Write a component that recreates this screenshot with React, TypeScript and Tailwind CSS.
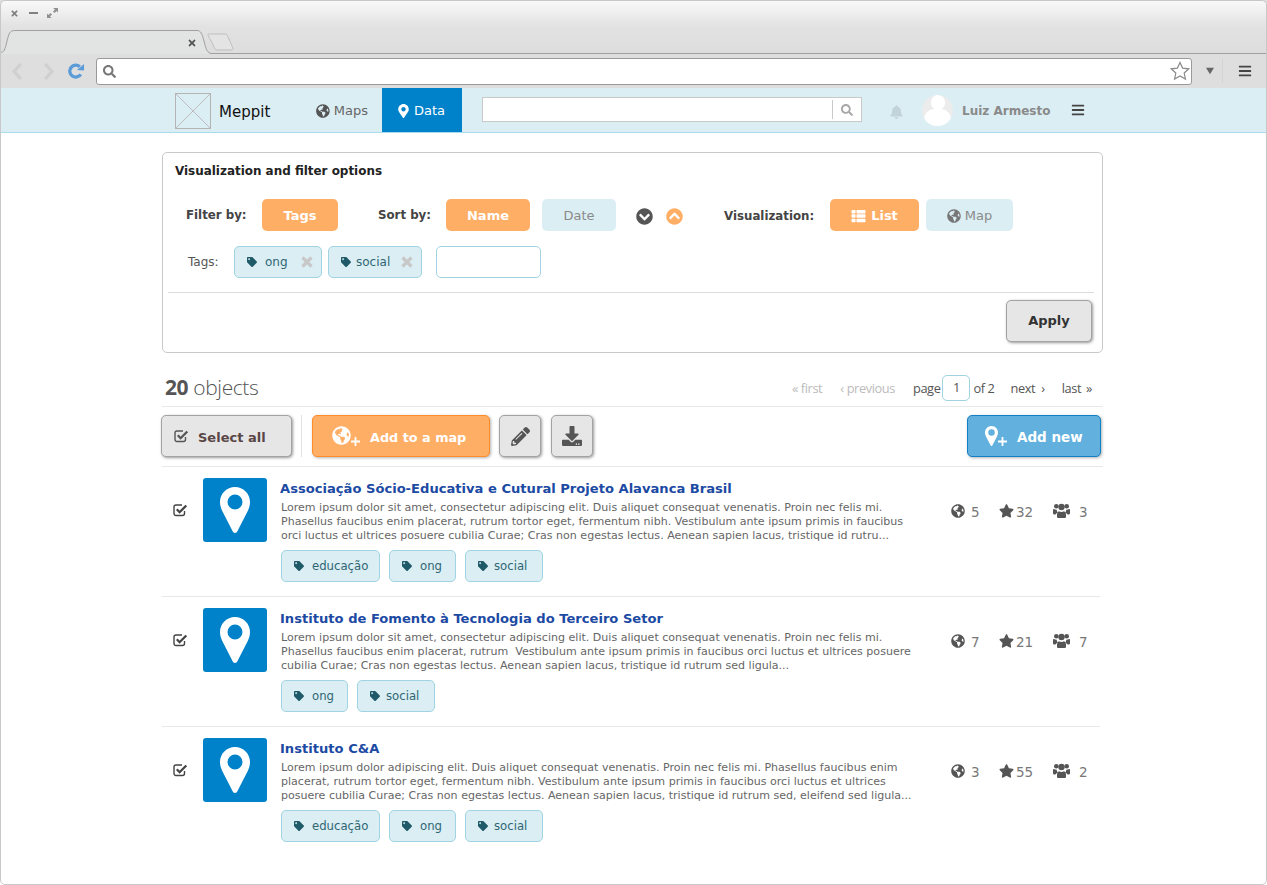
import type { ReactNode } from "react";
import {
  FaBars,
  FaBell,
  FaChevronCircleDown,
  FaChevronCircleUp,
  FaDownload,
  FaGlobeAmericas,
  FaMapMarkerAlt,
  FaPencilAlt,
  FaSearch,
  FaStar,
  FaTag,
  FaThList,
  FaTimes,
} from "react-icons/fa";

const lorem1 = [
  "Lorem ipsum dolor sit amet, consectetur adipiscing elit. Duis aliquet consequat venenatis. Proin nec felis mi.",
  "Phasellus faucibus enim placerat, rutrum tortor eget, fermentum nibh. Vestibulum ante ipsum primis in faucibus",
  "orci luctus et ultrices posuere cubilia Curae; Cras non egestas lectus. Aenean sapien lacus, tristique id rutru...",
];
const lorem2 = [
  "Lorem ipsum dolor sit amet, consectetur adipiscing elit. Duis aliquet consequat venenatis. Proin nec felis mi.",
  "Phasellus faucibus enim placerat, rutrum  Vestibulum ante ipsum primis in faucibus orci luctus et ultrices posuere",
  "cubilia Curae; Cras non egestas lectus. Aenean sapien lacus, tristique id rutrum sed ligula...",
];
const lorem3 = [
  "Lorem ipsum dolor adipiscing elit. Duis aliquet consequat venenatis. Proin nec felis mi. Phasellus faucibus enim",
  "placerat, rutrum tortor eget, fermentum nibh. Vestibulum ante ipsum primis in faucibus orci luctus et ultrices",
  "posuere cubilia Curae; Cras non egestas lectus. Aenean sapien lacus, tristique id rutrum sed, eleifend sed ligula...",
];

const items = [
  {
    title: "Associação Sócio-Educativa e Cutural Projeto Alavanca Brasil",
    text: lorem1,
    tags: ["educação", "ong", "social"],
    stats: ["5", "32", "3"],
  },
  {
    title: "Instituto de Fomento à Tecnologia do Terceiro Setor",
    text: lorem2,
    tags: ["ong", "social"],
    stats: ["7", "21", "7"],
  },
  {
    title: "Instituto C&A",
    text: lorem3,
    tags: ["educação", "ong", "social"],
    stats: ["3", "55", "2"],
  },
];

const tagWidths: Record<string, string> = {
  educação: "w-[99px]",
  ong: "w-[67px]",
  social: "w-[78px]",
};

function Pin({ className }: { className?: string }) {
  return (
    <svg viewBox="0 0 30 46" className={className}>
      <path
        fill="currentColor"
        fillRule="evenodd"
        d="M15 0C6.7 0 0 6.7 0 15c0 3.5 1 6 2 8.5L12.5 44c.5 1.2 1.4 2 2.5 2s2-.8 2.5-2L28 23.5c1-2.5 2-5 2-8.5C30 6.7 23.3 0 15 0zM15 7.5a7.5 7.5 0 1 1 0 15a7.5 7.5 0 0 1 0-15z"
      />
    </svg>
  );
}

function Plus() {
  return (
    <svg viewBox="0 0 10 10" className="w-[9px] h-[9px] shrink-0">
      <path d="M4 0h2v4h4v2H6v4H4V6H0V4h4z" fill="currentColor" />
    </svg>
  );
}

function CheckBox({ className }: { className?: string }) {
  return (
    <svg viewBox="0 0 15 14" className={className}>
      <path
        d="M11.500 8v2.500a2 2 0 0 1-2 2H3a2 2 0 0 1-2-2V4a2 2 0 0 1 2-2h6"
        fill="none"
        stroke="currentColor"
        strokeWidth="1.400"
      />
      <path d="M3.800 6.300L6.600 9.200L13.300 2.500" fill="none" stroke="currentColor" strokeWidth="2.300" />
    </svg>
  );
}

function Users({ className }: { className?: string }) {
  return (
    <svg viewBox="0 0 17 16" className={className}>
      <g fill="currentColor">
        <circle cx="3.300" cy="3.300" r="2.300" />
        <circle cx="13.700" cy="3.300" r="2.300" />
        <circle cx="8.500" cy="4" r="3.200" />
        <path d="M0 6.800C0 6 .7 5.800 1.500 6.300c.5.300 1.200.5 2.200.4C3.800 8 4.200 9 5 9.700C3.700 10 2.800 10.800 2.500 11.500H1C.4 11.500 0 11 0 10.300z" />
        <path d="M17 6.800C17 6 16.300 5.800 15.500 6.300c-.5.300-1.200.5-2.200.4C13.200 8 12.800 9 12 9.700c1.300.3 2.200 1.100 2.500 1.800H16c.6 0 1-.5 1-1.200z" />
        <path d="M4 11.500C4 10 5 8.800 6 8.300c.7.500 1.500.8 2.500.8s1.800-.3 2.500-.8c1 .5 2 1.700 2 3.200v2.300c0 .8-.6 1.200-1.300 1.200H5.300C4.600 15 4 14.600 4 13.800z" />
      </g>
    </svg>
  );
}

function BrowserChrome() {
  return (
    <div className="h-[88px] flex flex-col bg-[#dedede]">
      <div className="relative h-[54px] rounded-t-[6px] border-b border-[#a0a0a0] bg-gradient-to-b from-[#fafafa] via-[#e2e2e2] via-50% to-[#dddddd]">
        <div className="flex items-center pl-[10px] pt-[8px] text-[#808080]">
          <FaTimes className="w-[9px] h-[9px]" />
          <div className="ml-[10px] w-[9px] h-[2px] bg-[#808080]" />
          <svg viewBox="0 0 11 10" className="ml-[9px] w-[11px] h-[10px]">
            <path d="M6 0h5v4.500L9.500 3 7.500 5 6 3.500l2-2zM0 10V5.500L1.500 7l2-2L5 6.500l-2 2L4.500 10z" fill="#909090" />
          </svg>
        </div>
        {/* tab outline sits over the strip's bottom line */}
        <svg viewBox="0 0 240 26" className="absolute left-0 top-[28px] w-[240px] h-[26px]">
          <path d="M0 24.500C4 24.500 5 22 7 13C9 5 10 2.500 15 2.500H197C201 2.500 202 6 204 13C206 21 207 25.500 212 25.500V27H0z" fill="#e2e3e3" stroke="#a0a0a0" />
          <path d="M208 6.500C208 6 209 6 210 6H225C227 6 227 7 229 11C231 16 233 20 233 21C233 21.500 232 22 230 22H217C215 22 215 21 213 17C211 12 208 8 208 6.500z" fill="#e4e4e4" stroke="#bdbdbd" />
        </svg>
        <FaTimes className="absolute left-[187px] top-[38px] w-[10px] h-[10px] text-[#555]" />
      </div>
      <div className="flex-1 flex items-center pl-[11px] pr-[15px]">
        <svg viewBox="0 0 12 18" className="w-[12px] h-[17px] text-[#d0d0d0]">
          <path d="M10 1L3 9l7 8" fill="none" stroke="currentColor" strokeWidth="3.500" />
        </svg>
        <svg viewBox="0 0 12 18" className="ml-[20px] w-[12px] h-[17px] text-[#d0d0d0]">
          <path d="M2 1l7 8-7 8" fill="none" stroke="currentColor" strokeWidth="3.500" />
        </svg>
        <svg viewBox="0 0 18 18" className="ml-[13px] w-[17px] h-[17px]">
          <path d="M13.500 12A6.300 6.300 0 1 1 12.500 4" fill="none" stroke="#5b9bd8" strokeWidth="3.500" />
          <path d="M9.500 7.500L17 8V1z" fill="#5b9bd8" />
        </svg>
        <div className="ml-[11px] flex-1 h-[27px] flex items-center justify-between rounded-[3px] border border-[#9a9a9a] bg-white pl-[6px] pr-[1px]">
          <FaSearch className="w-[13px] h-[13px] text-[#777]" />
          <svg viewBox="0 0 20 20" className="w-[20px] h-[20px]">
            <path d="M10 1.500l2.600 5.600 6.100.7-4.500 4.200 1.200 6-5.400-3-5.400 3 1.200-6L1.300 7.800l6.100-.7z" fill="#fff" stroke="#8a8a8a" strokeWidth="1.200" />
          </svg>
        </div>
        <svg viewBox="0 0 10 8" className="ml-[14px] w-[8px] h-[8px]">
          <path d="M0 0h10L5 8z" fill="#666" />
        </svg>
        <div className="ml-[8px] w-px h-[24px] bg-[#d3d3d3]" />
        <FaBars className="ml-[15px] w-[14px] h-[14px] text-[#444]" />
      </div>
    </div>
  );
}

function Navbar() {
  return (
    <div className="h-[45px] border-b border-[#a9dceb] bg-[#dbeef4] flex pl-[175px]">
      <div className="relative mt-[5px] w-[36px] h-[36px] border border-[#b4b4b4] overflow-hidden">
        <svg viewBox="0 0 34 34" className="w-full h-full">
          <path d="M0 0l34 34M34 0L0 34" stroke="#bdbdbd" strokeWidth="1" />
        </svg>
      </div>
      <div className="ml-[8px] mt-[14px] w-[51px] text-[15px] leading-[20px] text-[#111]">Meppit</div>
      <div className="ml-[46px] mt-[15px] flex items-center h-[16px] w-[52px] text-[13px] text-[#666]">
        <FaGlobeAmericas className="w-[14px] h-[14px] text-[#555]" />
        <span className="ml-[4px]">Maps</span>
      </div>
      <div className="ml-[14px] w-[80px] h-[44px] bg-[#0082ca] text-white flex items-center pl-[16px] pt-[1px] text-[13px]">
        <FaMapMarkerAlt className="w-[11px] h-[14px]" />
        <span className="ml-[5px]">Data</span>
      </div>
      <div className="ml-[20px] mt-[9px] w-[380px] h-[25px] border border-[#c9c9c9] bg-white flex justify-end">
        <div className="w-[29px] my-[2px] border-l border-[#c9c9c9] flex items-center justify-center">
          <FaSearch className="w-[12px] h-[12px] text-[#a8a8a8]" />
        </div>
      </div>
      <FaBell className="ml-[28px] mt-[17px] w-[13px] h-[14px] text-[#c2d4da]" />
      <div className="relative ml-[19px] mt-[7px] w-[31px] h-[31px] rounded-full bg-[#ececec] overflow-hidden">
        <div className="absolute left-[9px] top-[0px] w-[14px] h-[15px] rounded-full bg-white" />
        <div className="absolute left-[2px] top-[14px] w-[27px] h-[20px] rounded-full bg-white" />
      </div>
      <div className="ml-[9px] mt-[15px] text-[12px] leading-[16px] font-bold text-[#8a8a8a]">Luiz Armesto</div>
      <FaBars className="ml-[21px] mt-[15px] w-[14px] h-[14px] text-[#444]" />
    </div>
  );
}

function FilterTag({ label, width }: { label: string; width: string }) {
  return (
    <div className={`h-[32px] flex items-center rounded-[5px] border border-[#a0d4e2] bg-[#dbeef4] pl-[12px] pr-[8px] text-[12px] text-[#2f6673] ${width}`}>
      <FaTag className={`w-[10px] h-[10px] text-[#1f5a68] ${label === "social" ? "mr-[5px]" : "mr-[8px]"}`} />
      <span>{label}</span>
      <svg viewBox="0 0 12 12" className="ml-auto w-[12px] h-[12px] text-[#c8c8c8]">
        <path d="M1.500 1.500l9 9M10.500 1.500l-9 9" fill="none" stroke="currentColor" strokeWidth="3.200" />
      </svg>
    </div>
  );
}

function Tag({ label }: { label: string }) {
  return (
    <div className={`h-[32px] flex items-center rounded-[5px] border border-[#a0d4e2] bg-[#dbeef4] pl-[12px] text-[11.700px] text-[#2f6673] ${tagWidths[label]}`}>
      <FaTag className={`w-[10px] h-[10px] text-[#1f5a68] ${label === "social" ? "mr-[6px]" : "mr-[8px]"}`} />
      <span className="pt-[1px]">{label}</span>
    </div>
  );
}

function Pill({ active, className, children }: { active?: boolean; className: string; children: ReactNode }) {
  return (
    <div
      className={`h-[32px] flex items-center justify-center rounded-[5px] pt-[1px] text-[13px] ${
        active ? "bg-[#ffae66] text-white font-bold" : "bg-[#dbeef4] text-[#8a8a8a]"
      } ${className}`}
    >
      {children}
    </div>
  );
}

function FilterPanel() {
  return (
    <div className="w-[941px] h-[201px] rounded-[5px] border border-[#c9c9c9] flex flex-col">
      <div className="pl-[12px] pt-[10px] text-[11.950px] leading-[16px] font-bold text-[#222]">
        Visualization and filter options
      </div>
      <div className="mt-[20px] flex items-center h-[32px]">
        <div className="ml-[23px] w-[76px] pt-[1px] text-[11.800px] font-bold text-[#444]">Filter by:</div>
        <Pill active className="w-[76px]">Tags</Pill>
        <div className="ml-[40px] w-[68px] pt-[1px] text-[11.800px] font-bold text-[#444]">Sort by:</div>
        <Pill active className="w-[84px]">Name</Pill>
        <Pill className="ml-[12px] w-[74px]">Date</Pill>
        <FaChevronCircleDown className="ml-[20px] mt-[2px] w-[17px] h-[17px] text-[#555]" />
        <FaChevronCircleUp className="ml-[13px] mt-[2px] w-[17px] h-[17px] text-[#ffae66]" />
        <div className="ml-[41px] w-[106px] pt-[3px] text-[11.800px] font-bold text-[#444]">Visualization:</div>
        <Pill active className="w-[89px]">
          <FaThList className="w-[15px] h-[14px] mr-[5px]" />
          List
        </Pill>
        <Pill className="ml-[7px] w-[87px]">
          <FaGlobeAmericas className="w-[14px] h-[14px] mr-[4px] text-[#777]" />
          Map
        </Pill>
      </div>
      <div className="mt-[15px] flex items-center h-[32px]">
        <div className="ml-[25px] w-[46px] text-[12px] text-[#555]">Tags:</div>
        <FilterTag label="ong" width="w-[88px]" />
        <div className="w-[6px]" />
        <FilterTag label="social" width="w-[94px]" />
        <div className="ml-[14px] w-[105px] h-[32px] rounded-[5px] border border-[#a0d4e2] bg-white" />
      </div>
      <div className="mt-[14px] ml-[5px] mr-[8px] border-t border-[#dcdcdc]" />
      <div className="mt-[7px] flex justify-end pr-[10px]">
        <div className="w-[86px] h-[42px] flex items-center justify-center rounded-[5px] border border-[#a3a3a3] bg-[#e6e6e6] shadow-[1px_1px_3px_rgba(0,0,0,0.4)] text-[13px] font-bold text-[#333]">
          Apply
        </div>
      </div>
    </div>
  );
}

function Pagination() {
  return (
    <div className="flex items-center font-['Open_Sans',sans-serif] text-[12.800px] tracking-[-0.4px] text-[#555]">
      <span className="pt-[3px] text-[#bbb]">« first</span>
      <span className="ml-[18px] pt-[3px] text-[#bbb]">‹ previous</span>
      <span className="ml-[18px] pt-[3px]">page</span>
      <div className="mx-[2px] w-[28px] h-[26px] flex items-center justify-center rounded-[5px] border border-[#a0d4e2]">1</div>
      <span className="ml-[1px] pt-[3px]">of 2</span>
      <span className="ml-[16px] pt-[3px]">next<span className="ml-[6px]">›</span></span>
      <span className="ml-[17px] pt-[3px]">last<span className="ml-[5px]">»</span></span>
    </div>
  );
}

const grayButton = "h-[42px] flex items-center rounded-[5px] border border-[#a3a3a3] bg-[#e6e6e6] shadow-[1px_1px_3px_rgba(0,0,0,0.4)]";

function Toolbar() {
  return (
    <div className="w-[941px] h-[61px] border-y border-[#e8e8e8] flex items-start pt-[8px]">
      <div className={`${grayButton} -ml-[1px] w-[131px] pl-[12px] text-[13px] font-bold text-[#5a4646]`}>
        <CheckBox className="w-[15px] h-[14px] text-[#555]" />
        <span className="ml-[9px] pt-[3px]">Select all</span>
      </div>
      <div className="ml-[9px] w-px h-[42px] bg-[#e3e3e3]" />
      <div className="ml-[10px] w-[178px] h-[42px] flex items-center pl-[19px] rounded-[5px] border border-[#ff8c29] bg-[#ffae66] shadow-[1px_1px_3px_rgba(0,0,0,0.3)] text-white text-[12.800px] font-bold">
        <div className="flex items-end">
          <FaGlobeAmericas className="w-[19px] h-[19px] mb-[1px]" />
          <Plus />
        </div>
        <span className="ml-[10px] pt-[3px]">Add to a map</span>
      </div>
      <div className={`${grayButton} ml-[9px] w-[42px] justify-center`}>
        <FaPencilAlt className="w-[19px] h-[19px] text-[#555]" />
      </div>
      <div className={`${grayButton} ml-[10px] w-[42px] justify-center`}>
        <FaDownload className="w-[20px] h-[20px] text-[#555]" />
      </div>
      <div className="ml-auto mr-[2px] w-[134px] h-[42px] flex items-center pl-[17px] rounded-[5px] border border-[#1180c4] bg-[#61b0de] shadow-[1px_1px_3px_rgba(0,0,0,0.3)] text-white text-[13.500px] font-bold">
        <div className="flex items-end">
          <Pin className="w-[13px] h-[20px]" />
          <Plus />
        </div>
        <span className="ml-[10px] pt-[2px]">Add new</span>
      </div>
    </div>
  );
}

function Stat({ icon, value, className }: { icon: ReactNode; value: string; className: string }) {
  return (
    <div className={`flex items-center text-[13.500px] text-[#777] ${className}`}>
      {icon}
      <span className="pt-[2px]">{value}</span>
    </div>
  );
}

function Item({ item, last }: { item: (typeof items)[number]; last: boolean }) {
  return (
    <div className={`w-[938px] h-[130px] flex pt-[11px] ${last ? "" : "border-b border-[#e8e8e8]"}`}>
      <CheckBox className="ml-[11px] mt-[25px] w-[15px] h-[14px] text-[#444] shrink-0" />
      <div className="ml-[15px] w-[64px] h-[64px] shrink-0 rounded-[3px] bg-[#0082ca] flex items-center justify-center text-white">
        <Pin className="w-[30px] h-[46px]" />
      </div>
      <div className="ml-[13px] w-[660px] shrink-0">
        <div className="h-[23px] pt-[1px] text-[13.100px] leading-[20px] font-bold text-[#1c4aa3]">{item.title}</div>
        <div className="ml-[1px] text-[11.060px] leading-[14px] text-[#666] whitespace-pre">
          {item.text.map((line) => (
            <div key={line}>{line}</div>
          ))}
        </div>
        <div className="ml-[1px] mt-[7px] flex gap-[9px]">
          {item.tags.map((t) => (
            <Tag key={t} label={t} />
          ))}
        </div>
      </div>
      <div className="flex h-[16px] mt-[25px] ml-[11px]">
        <Stat
          className="w-[48px]"
          value={item.stats[0]}
          icon={<FaGlobeAmericas className="w-[14px] h-[14px] mr-[6px] text-[#555]" />}
        />
        <Stat
          className="w-[54px]"
          value={item.stats[1]}
          icon={<FaStar className="w-[15px] h-[14px] mr-[2px] text-[#555]" />}
        />
        <Stat
          className="w-[40px]"
          value={item.stats[2]}
          icon={<Users className="w-[17px] h-[16px] mr-[9px] text-[#555]" />}
        />
      </div>
    </div>
  );
}

export default function App() {
  return (
    <div className="relative w-[1267px] h-[885px] overflow-hidden bg-white font-['DejaVu_Sans',sans-serif]">
      <BrowserChrome />
      <Navbar />
      <div className="ml-[162px] pt-[19px]">
        <FilterPanel />
        <div className="w-[941px] h-[53px] flex items-center justify-between pr-[11px] pl-[3px] pt-[16px]">
          <div className="font-['Open_Sans',sans-serif] text-[21px] font-light tracking-[-0.4px] text-[#555]">
            <span className="font-bold">20</span> objects
          </div>
          <Pagination />
        </div>
        <Toolbar />
        {items.map((item, i) => (
          <Item key={item.title} item={item} last={i === items.length - 1} />
        ))}
      </div>
      {/* window frame */}
      <div className="absolute inset-0 rounded-[5px] border border-[#c8c8c8] pointer-events-none" />
    </div>
  );
}
